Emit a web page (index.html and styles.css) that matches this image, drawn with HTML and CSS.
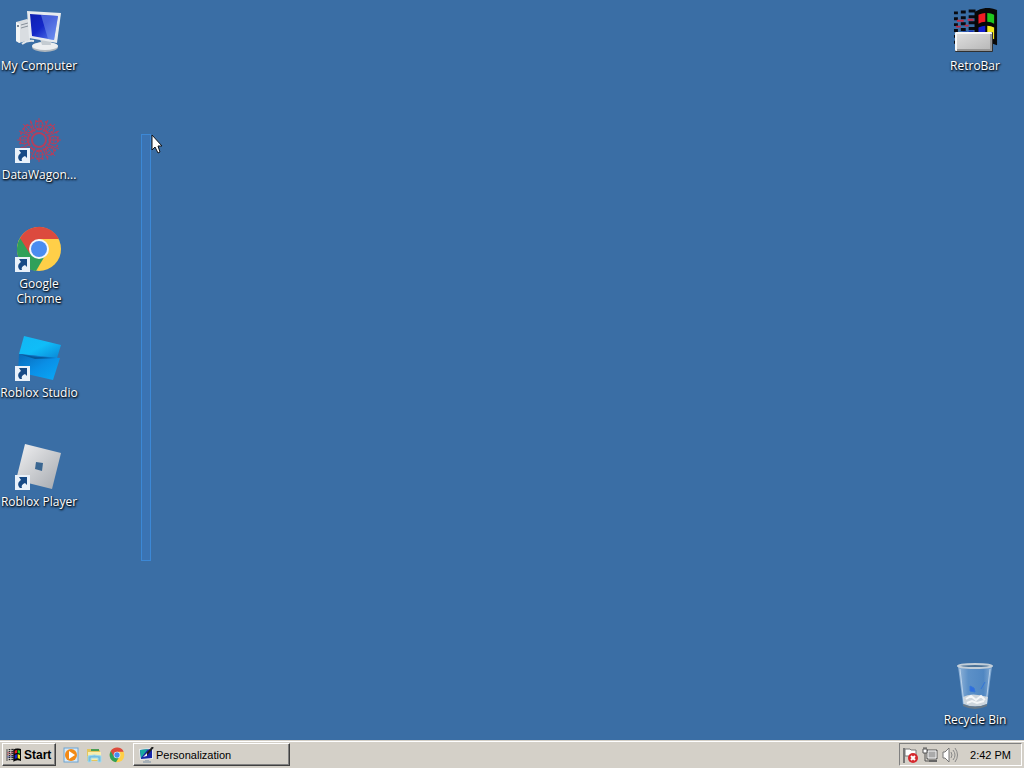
FILE: index.html
```html
<!DOCTYPE html>
<html lang="en">
<head>
<meta charset="utf-8">
<title>Desktop</title>
<link rel="stylesheet" href="styles.css">
</head>
<body>
<svg class="defs" aria-hidden="true">
  <defs>
    <linearGradient id="screen" x1="0" y1="0" x2="1" y2="1"><stop offset="0" stop-color="#1020b0"/><stop offset=".45" stop-color="#1428c8"/><stop offset="1" stop-color="#5f86f0"/></linearGradient>
    <linearGradient id="silver" x1="0" y1="0" x2="1" y2="1"><stop offset="0" stop-color="#f2f2f3"/><stop offset="1" stop-color="#a4a8ae"/></linearGradient>
    <linearGradient id="studioTop" x1="0" y1="0" x2="1" y2="1"><stop offset="0" stop-color="#12b6f4"/><stop offset=".5" stop-color="#10bdf8"/><stop offset="1" stop-color="#0a86d6"/></linearGradient>
    <linearGradient id="studioBottom" x1="0" y1="0" x2="1" y2="1"><stop offset="0" stop-color="#0869b8"/><stop offset=".5" stop-color="#0a8fe6"/><stop offset="1" stop-color="#08aaf8"/></linearGradient>
    <linearGradient id="glass" x1="0" y1="0" x2="1" y2="0"><stop offset="0" stop-color="#b9d3ee"/><stop offset=".3" stop-color="#6b9fd6"/><stop offset=".75" stop-color="#5a92cf"/><stop offset="1" stop-color="#a9c8e8"/></linearGradient>
    <linearGradient id="bar" x1="0" y1="0" x2="1" y2="1"><stop offset="0" stop-color="#dedede"/><stop offset="1" stop-color="#b9b9b9"/></linearGradient>
    <symbol id="shortcut" viewBox="0 0 15 15">
      <rect width="15" height="15" fill="#e9f1fa"/>
      <path d="M4 2h8v8l-2-2c-3 1-4 3-3 5H5C2 10 3 7 6 5z" fill="#174a86"/>
    </symbol>
    <symbol id="chrome" viewBox="0 0 48 48">
      <circle cx="24" cy="24" r="22" fill="#ffcf48"/>
      <path d="M24 24 5 13A22 22 0 0 0 21 46L31 29z" fill="#2fa05a"/>
      <path d="M24 14h20A22 22 0 0 0 5 13l10 16z" fill="#dc4a3e"/>
      <circle cx="24" cy="24" r="10" fill="#f4f7fb"/>
      <circle cx="24" cy="24" r="8" fill="#4a8cf0"/>
    </symbol>
    <symbol id="flag" viewBox="0 0 48 48">
      <path d="M1 5h4M8 4h5M16 3h7M1 11h4M8 10h5M16 9h7M1 17h4M8 16h5M16 15h7M1 23h4M8 22h5M16 21h7M1 29h4M8 28h5M16 27h7M1 35h4M8 34h5M16 33h7" stroke="#080a10" stroke-width="3"/>
      <path d="M4 13h4M8 13h3M15 12h6M3 19h5M12 18h4" stroke="#c02c45" stroke-width="2"/>
      <path d="M4 26h5M10 25h4M16 24h5" stroke="#1830b8" stroke-width="2"/>
      <path d="M22 4q11-7 23-2v36q-12-6-23 2z" fill="#080808"/>
      <path d="M26 7q4-2 7-2v9q-4 0-7 2z" fill="#ef1c24"/>
      <path d="M35 5q4 0 7 2v9q-3-2-7-2z" fill="#20c720"/>
      <path d="M26 20q4-2 7-2v12q-4 0-7 2z" fill="#1420d0"/>
      <path d="M35 18q4 0 7 2v12q-3-2-7-2z" fill="#f4e820"/>
    </symbol>
  </defs>
</svg>

<main class="desktop">
  <section class="column">
    <button class="item">
      <svg class="icon" viewBox="0 0 48 48">
        <path d="M1 14 12 11l3 2v19L4 35l-3-2z" fill="#d9dde1"/>
        <path d="M1 14 5 16v19l-4-2z" fill="#f2f4f5"/>
        <path d="M6 17l7-2M6 20l7-2" stroke="#87909a"/>
        <circle cx="3" cy="18" r="1" fill="#536372"/>
        <path d="M7 36q5-4 12-3" fill="none" stroke="#e2e6ea" stroke-width="2"/>
        <ellipse cx="30" cy="39" rx="13" ry="5" fill="#aeb6bd"/>
        <ellipse cx="30" cy="38" rx="13" ry="4" fill="#eceef0"/>
        <path d="M25 31h10l1 6h-9z" fill="#c4cbd1"/>
        <path d="M12 3 46 5 42 35 14 30z" fill="#e7ebef"/>
        <path d="M15 6 43 8 39 32 17 28z" fill="url(#screen)"/>
        <path d="M26 7 43 8 39 32 33 31z" fill="#7d9df2" opacity=".5"/>
      </svg>
      <span class="label">My Computer</span>
    </button>
    <button class="item">
      <svg class="icon" viewBox="0 0 48 48">
        <g fill="none" stroke="#b0405f">
          <circle cx="24" cy="23" r="7" stroke-width="2"/>
          <circle cx="24" cy="23" r="11" stroke-width="2" stroke-dasharray="6 1"/>
          <circle cx="24" cy="8" r="4"/>
          <circle cx="24" cy="38" r="4"/>
          <circle cx="9" cy="23" r="4"/>
          <circle cx="39" cy="23" r="4"/>
          <circle cx="13" cy="12" r="4"/>
          <circle cx="35" cy="12" r="4"/>
          <circle cx="35" cy="34" r="4"/>
          <circle cx="24" cy="23" r="15" stroke-dasharray="4 2"/>
          <circle cx="24" cy="23" r="19" stroke-width="2" stroke-dasharray="2 3"/>
          <path d="M24 1v13M24 32v13M2 23h13M33 23h13M8 7l10 10M30 29l10 10M40 7 30 17M15 3l5 12M33 3l-5 12M4 14l12 5M44 14l-12 5M4 32l12-5M44 32l-12-5M15 43l5-12M33 43l-5-12"/>
        </g>
        <use href="#shortcut" x="0" y="31" width="15" height="15"/>
      </svg>
      <span class="label">DataWagon...</span>
    </button>
    <button class="item">
      <svg class="icon" viewBox="0 0 48 48">
        <use href="#chrome" y="-1" width="48" height="48"/>
        <use href="#shortcut" x="0" y="31" width="15" height="15"/>
      </svg>
      <span class="label">Google<br>Chrome</span>
    </button>
    <button class="item">
      <svg class="icon" viewBox="0 0 48 48">
        <path d="M9 1 46 10 42 23 4 19z" fill="url(#studioTop)"/>
        <path d="M4 19 45 23 38 45 3 37z" fill="url(#studioBottom)"/>
        <path d="M4 19q16 3 22 3l15 1-21 1z" fill="#075a9c"/>
        <use href="#shortcut" x="0" y="31" width="15" height="15"/>
      </svg>
      <span class="label">Roblox Studio</span>
    </button>
    <button class="item">
      <svg class="icon" viewBox="0 0 48 48">
        <path d="M10 0 46 9 37 45 1 36z" fill="url(#silver)"/>
        <path d="M21 18 28 19 27 27 20 25z" fill="#3a6691"/>
        <use href="#shortcut" x="0" y="31" width="15" height="15"/>
      </svg>
      <span class="label">Roblox Player</span>
    </button>
  </section>

  <section class="column column-right">
    <button class="item">
      <svg class="icon" viewBox="0 0 48 48">
        <use href="#flag" x="2" width="47" height="47"/>
        <rect x="4" y="24" width="38" height="20" rx="1" fill="#303030"/>
        <rect x="4" y="24" width="37" height="19" rx="1" fill="#f7f7f7"/>
        <rect x="6" y="26" width="35" height="17" fill="#969696"/>
        <rect x="6" y="26" width="33" height="15" fill="url(#bar)"/>
      </svg>
      <span class="label">RetroBar</span>
    </button>
    <button class="item">
      <svg class="icon" viewBox="0 0 48 48">
        <path d="M7 4 41 4 36 43q-12 5-24 0z" fill="url(#glass)" opacity=".7"/>
        <path d="M12 35q8-5 25 0l-1 7q-12 5-23 0z" fill="#cdd5dc"/>
        <path d="M15 37l5-3 5 4 5-4 4 4M16 41l5-2 5 2 7-2" fill="none" stroke="#f4f6f8" stroke-width="2"/>
        <path d="M12 42q12 5 24 0v2q-12 6-24 0z" fill="#687887"/>
        <path d="M19 24l4 2 1 4-5-1zM34 20l-4 7" fill="#2f6de0" stroke="#3476d8"/>
        <path d="M9 7l4 35M39 7l-4 35" stroke="#d3e4f5" opacity=".7"/>
        <ellipse cx="24" cy="4" rx="17" ry="2" fill="#4b7297" stroke="#c3ced8" stroke-width="2"/>
      </svg>
      <span class="label">Recycle Bin</span>
    </button>
  </section>
  <div class="selection"></div>
  <svg class="cursor" viewBox="0 0 12 20"><path d="M1 1v15l3-3 3 6 2-1-2-6h4z" fill="#fff" stroke="#10151c"/></svg>
</main>

<footer class="taskbar">
  <button class="raised start"><svg class="small" viewBox="0 0 48 48"><use href="#flag" y="4" width="48" height="48"/></svg>Start</button>
  <nav class="quick">
    <button class="launch" aria-label="Media Player">
      <svg class="small" viewBox="0 0 16 16"><rect x="1" y="1" width="14" height="14" fill="#d7e9f7" stroke="#6ea3d0"/><circle cx="8" cy="8" r="6" fill="#f28a16"/><path d="M6 4l6 4-6 4z" fill="#fff"/></svg>
    </button>
    <button class="launch" aria-label="Explorer">
      <svg class="small" viewBox="0 0 16 16"><path d="M1 2h5l1 1h7v11H1z" fill="#e4c65c"/><path d="M2 5h13v8H2z" fill="#f8eeb0"/><path d="M5 3h8" stroke="#4b9d54" stroke-width="2"/><path d="M2 15V9q6-2 13 0v6h-3v-4H5v4z" fill="#76bfe0" stroke="#a4dbef"/></svg>
    </button>
    <button class="launch" aria-label="Chrome"><svg class="small" viewBox="0 0 48 48"><use href="#chrome" width="48" height="48"/></svg></button>
  </nav>
  <button class="raised task">
    <svg class="small" viewBox="0 0 16 16"><path d="M1 2l14-1v11L2 13z" fill="#e7edf0"/><path d="M2 3l12-1v9L3 12z" fill="#1625a8"/><path d="M2 3l8-1-7 9z" fill="#18a9a0"/><path d="M15 0 8 8" stroke="#202020" stroke-width="2"/><path d="M9 6 5 10l4-1z" fill="#f0f0f0"/><path d="M7 13h4v1h2v2H5v-2h2z" fill="#a6afb6"/></svg>
    Personalization
  </button>
  <div class="tray">
    <svg class="small" viewBox="0 0 16 16"><path d="M2 1v15" stroke="#777" stroke-width="2"/><path d="M3 2h5l1 1h5v7H8L7 9H3z" fill="#fff" stroke="#777"/><circle cx="11" cy="11" r="5" fill="#d5282e"/><path d="M9 9l4 4M13 9l-4 4" stroke="#fff" stroke-width="2"/></svg>
    <svg class="small" viewBox="0 0 16 16"><path d="M5 3h10v9H5z" fill="#aaa" stroke="#555"/><path d="M6 4h8v7H6z" fill="none" stroke="#f5f5f5"/><path d="M7 14h8" stroke="#666" stroke-width="2"/><path d="M1 2h4v4H1z" fill="#fff" stroke="#555"/><path d="M2 0v2M4 0v2M3 6v8h4" fill="none" stroke="#555"/></svg>
    <svg class="small" viewBox="0 0 16 16"><path d="M1 5h2l4-4v14l-4-4H1z" fill="#fff" stroke="#777"/><path d="M9 5q2 3 0 6M11 3q4 5 0 10M13 1q5 7 0 14" fill="none" stroke="#888"/></svg>
    <time class="clock">2:42 PM</time>
  </div>
</footer>
</body>
</html>
```
FILE: styles.css
```css
* { box-sizing: border-box; }
body {
  margin: 0;
  min-height: 100vh;
  display: flex;
  flex-direction: column;
  background: #3a6ea5;
  font-family: "Liberation Sans", Arial, sans-serif;
  font-size: 11px;
  color: #000;
}
button {
  font: inherit;
  color: inherit;
  border: 0;
  padding: 0;
  background: none;
}
svg { display: block; flex: none; }
.defs { position: absolute; width: 0; height: 0; }
.desktop {
  position: relative;
  flex: 1;
  display: flex;
  justify-content: space-between;
}
.column { display: flex; flex-direction: column; }
.column-right {
  justify-content: space-between;
  padding: 0 10px 13px 0;
}
.item {
  width: 78px;
  min-height: 73px;
  padding-top: 8px;
  display: flex;
  flex-direction: column;
  align-items: center;
  gap: 2px;
}
.column:first-child .item { height: 109px; }
.icon { width: 48px; height: 48px; }
.label {
  font-family: "Open Sans", "Noto Sans", sans-serif;
  font-size: 12px;
  line-height: 15px;
  white-space: nowrap;
  text-align: center;
  color: #fff;
  text-shadow: 1px 1px 2px #000, 0 1px 2px #0a1c30;
}
.selection {
  position: absolute;
  left: 141px;
  top: 134px;
  width: 10px;
  height: 427px;
  border: 1px solid #3c88d6;
  background: #3a73b3;
}
.cursor {
  position: absolute;
  left: 151px;
  top: 134px;
  width: 12px;
  height: 20px;
}
.taskbar {
  height: 28px;
  display: flex;
  align-items: stretch;
  padding: 2px;
  background: #d4d0c8;
  border-top: 1px solid #d4d0c8;
  box-shadow: inset 0 1px #fff;
}
.raised {
  display: flex;
  align-items: center;
  border: 1px solid;
  border-color: #fff #404040 #404040 #fff;
  box-shadow: inset -1px -1px #808080;
}
.small { width: 16px; height: 16px; }
.start {
  width: 54px;
  padding-left: 3px;
  gap: 2px;
  font-size: 12px;
  font-weight: bold;
}
.quick { display: flex; padding: 0 5px 0 3px; }
.launch {
  width: 23px;
  display: flex;
  align-items: center;
  justify-content: center;
}
.task {
  width: 157px;
  padding-left: 4px;
  gap: 2px;
}
.tray {
  margin-left: auto;
  display: flex;
  align-items: center;
  gap: 4px;
  padding: 0 10px 0 2px;
  border: 1px solid;
  border-color: #808080 #fff #fff #808080;
}
.clock { padding-left: 8px; }
```
